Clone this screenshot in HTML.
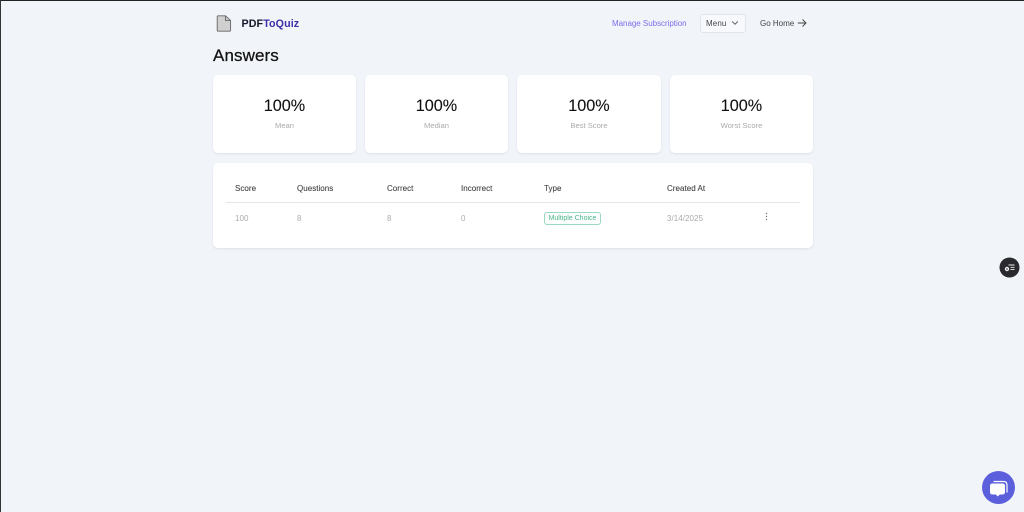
<!DOCTYPE html>
<html><head><meta charset="utf-8"><style>
html,body{margin:0;padding:0}
body{width:1024px;height:512px;overflow:hidden;background:#f1f4f9;position:relative;font-family:"Liberation Sans",sans-serif}
.t{position:absolute;white-space:nowrap;line-height:12px}
.card{position:absolute;background:#fff;border-radius:5px;box-shadow:0 1px 2px rgba(60,70,90,.10)}
.th{font-size:8px;color:#444;top:183px;letter-spacing:.03px;-webkit-text-stroke:.1px #444}
.td{font-size:8px;color:#aaa;top:213px;letter-spacing:.05px}
.big{font-size:16.2px;color:#111;top:99px;width:143px;text-align:center;line-height:14px;-webkit-text-stroke:.1px #111}
.lab{font-size:7.6px;color:#aaa;top:120px;width:143px;text-align:center}
</style></head><body>
<div style="position:absolute;left:0;top:0;width:1024px;height:1px;background:#222"></div>
<div style="position:absolute;left:0;top:0;width:1px;height:512px;background:#333"></div>

<svg style="position:absolute;left:216px;top:15px" width="16" height="17" viewBox="0 0 16 17"><path d="M2 .8H9.5L14.6 5.6V15.4a.8.8 0 0 1-.8.8H2a.8.8 0 0 1-.8-.8V1.6A.8.8 0 0 1 2 .8Z" fill="#cfcfcf" stroke="#666" stroke-width=".9"/><path d="M9.5 1V5.6H14.5" fill="none" stroke="#666" stroke-width=".9"/></svg>
<div class="t" style="left:241.5px;top:18px;font-size:10.7px;font-weight:bold;color:#16162a;letter-spacing:.1px">PDF<span style="color:#3d2fa8">ToQuiz</span></div>

<div class="t" style="left:612px;top:18px;font-size:8px;color:#7a70ea;letter-spacing:-.03px">Manage Subscription</div>
<div style="position:absolute;left:700px;top:14px;width:44px;height:17px;background:#f8f9fc;border:1px solid #e2e4ea;border-radius:3px;box-sizing:content-box"></div>
<div class="t" style="left:706px;top:18px;font-size:8px;color:#444;letter-spacing:.1px">Menu</div>
<svg style="position:absolute;left:731px;top:20px" width="8" height="6" viewBox="0 0 8 6"><path d="M1.2 1.5L4 4.3L6.8 1.5" fill="none" stroke="#555" stroke-width=".9"/></svg>
<div class="t" style="left:760px;top:18px;font-size:8px;color:#444;letter-spacing:0">Go Home</div>
<svg style="position:absolute;left:797px;top:18px" width="10" height="10" viewBox="0 0 10 10"><path d="M.8 5H9M5.5 1.5L9 5L5.5 8.5" fill="none" stroke="#444" stroke-width=".9"/></svg>

<div class="t" style="left:213px;top:47px;font-size:17px;line-height:18px;color:#111;letter-spacing:.1px;-webkit-text-stroke:.25px #111">Answers</div>

<div class="card" style="left:213px;top:75px;width:143px;height:78px"></div>
<div class="card" style="left:365px;top:75px;width:143px;height:78px"></div>
<div class="card" style="left:517px;top:75px;width:144px;height:78px"></div>
<div class="card" style="left:670px;top:75px;width:143px;height:78px"></div>

<div class="t big" style="left:213px">100%</div><div class="t lab" style="left:213px">Mean</div>
<div class="t big" style="left:365px">100%</div><div class="t lab" style="left:365px">Median</div>
<div class="t big" style="left:517.5px">100%</div><div class="t lab" style="left:517.5px">Best Score</div>
<div class="t big" style="left:670px">100%</div><div class="t lab" style="left:670px">Worst Score</div>

<div class="card" style="left:213px;top:163px;width:600px;height:85px"></div>
<div style="position:absolute;left:226px;top:202px;width:574px;height:1px;background:#e3e5ea"></div>
<div class="t th" style="left:235px">Score</div>
<div class="t th" style="left:297px">Questions</div>
<div class="t th" style="left:387px">Correct</div>
<div class="t th" style="left:461px">Incorrect</div>
<div class="t th" style="left:544px">Type</div>
<div class="t th" style="left:667px">Created At</div>
<div class="t td" style="left:235px">100</div>
<div class="t td" style="left:297px">8</div>
<div class="t td" style="left:387px">8</div>
<div class="t td" style="left:461px">0</div>
<div class="t" style="left:544px;top:212px;width:55px;height:11px;border:1px solid #9ad8bf;border-radius:3px;font-size:7px;color:#4fb58d;text-align:center;line-height:12px;background:#fbfefd">Multiple Choice</div>
<div class="t td" style="left:667px">3/14/2025</div>
<svg style="position:absolute;left:764px;top:212px" width="5" height="10" viewBox="0 0 5 10"><circle cx="2.5" cy="1.5" r=".7" fill="#777"/><circle cx="2.5" cy="4.5" r=".7" fill="#777"/><circle cx="2.5" cy="7.5" r=".7" fill="#777"/></svg>

<svg style="position:absolute;left:999px;top:257px" width="21" height="21" viewBox="0 0 21 21"><circle cx="10.5" cy="10.5" r="10" fill="#2a2a2e"/><path d="M9.5 8H15.5M11.5 10.3H15.5M11.5 12.6H15.5" stroke="#eee" stroke-width=".9"/><circle cx="8" cy="12" r="2.2" fill="#eee"/><circle cx="8" cy="12" r=".8" fill="#2a2a2e"/></svg>

<svg style="position:absolute;left:982px;top:471px" width="34" height="34" viewBox="0 0 34 34"><circle cx="16.5" cy="16.5" r="16.5" fill="#5b5fdc"/><path d="M12 10.5H21.5Q25 10.5 25 14V21" fill="none" stroke="#fff" stroke-width="1.2" stroke-linecap="round"/><path d="M10.5 12.5H20.5Q23 12.5 23 15V21Q23 23.5 20.5 23.5H17.8L15.8 25.5L13.8 23.5H10.5Q8 23.5 8 21V15Q8 12.5 10.5 12.5Z" fill="#fff"/></svg>
</body></html>
